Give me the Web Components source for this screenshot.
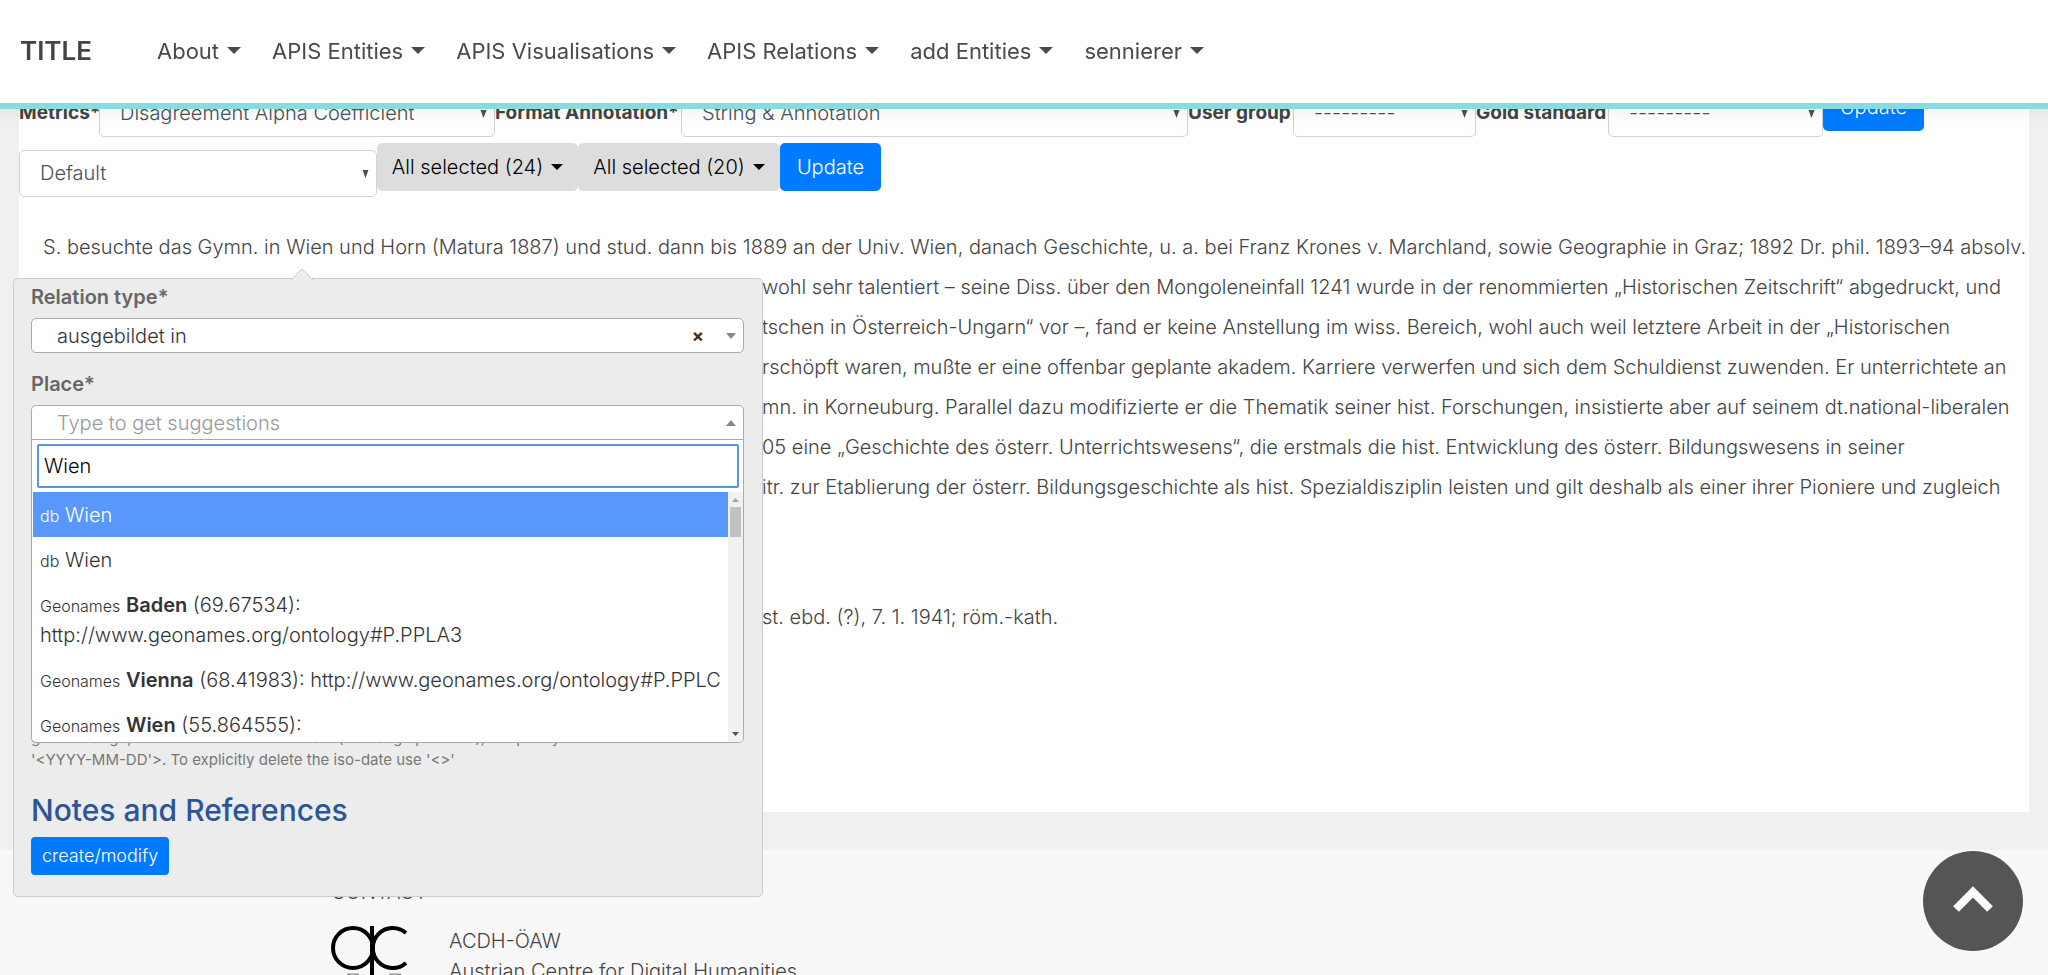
<!DOCTYPE html>
<html lang="de">
<head>
<meta charset="utf-8">
<title>APIS</title>
<style>
  body { margin: 0; font: 300 20px/30px Inter, "Liberation Sans", sans-serif; color: #444; background: #f0f0f0; }
</style>
</head>
<body>
<apis-page></apis-page>
<script>
const define = (name, html, setup) => {
  const template = document.createElement('template');
  template.innerHTML = html;
  customElements.define(name, class extends HTMLElement {
    constructor() {
      super();
      this.attachShadow({ mode: 'open' }).append(template.content.cloneNode(true));
      if (setup) setup(this, this.shadowRoot);
    }
  });
};

define('nav-item', `
<style>
  :host { display: block; }
  a { display: flex; align-items: center; gap: 8px; color: #4a4a4a; text-decoration: none; font-size: 22px; font-weight: 400; white-space: nowrap; }
  i { border: 7px solid transparent; border-top-color: currentColor; border-bottom: 0; }
</style>
<a href="#"><slot></slot><i></i></a>`);

define('site-header', `
<style>
  :host { display: block; position: fixed; inset: 0 0 auto 0; z-index: 10; background: #fff; border-bottom: 6px solid #88dbdf; box-shadow: 0 0 25px rgba(0,0,0,.08); }
  nav { display: flex; align-items: center; gap: 31px; height: 101px; padding: 0 20px 2px; }
  .brand { font-size: 26px; font-weight: 600; color: #444; text-decoration: none; width: 106px; }
</style>
<nav>
  <a class="brand" href="#">TITLE</a>
  <nav-item>About</nav-item>
  <nav-item>APIS Entities</nav-item>
  <nav-item>APIS Visualisations</nav-item>
  <nav-item>APIS Relations</nav-item>
  <nav-item>add Entities</nav-item>
  <nav-item>sennierer</nav-item>
</nav>`);

define('filter-form', `
<style>
  :host { display: block; }
  .row { display: grid; align-items: start; height: 60px; }
  .first { grid-template-columns: 80fr 396fr 186fr 507fr 105fr 183fr 132fr 215fr 101fr 105fr; }
  .second { grid-template-columns: 358fr 201fr 202fr 101fr 1148fr; }
  label { margin-top: 7px; line-height: 45px; font-weight: 700; font-size: 19px; white-space: nowrap; min-width: 0; }
  .pick { display: grid; align-items: center; margin-top: 7px; min-width: 0; }
  .pick > * { grid-area: 1 / 1; }
  .pick svg { justify-self: end; margin-right: 8px; width: 7px; height: 8px; fill: #495057; pointer-events: none; }
  select { appearance: none; box-sizing: border-box; width: 100%; height: 47px; padding: 0 20px 2px; border: 1px solid #ced4da; border-radius: 5px; background: #fff; color: #495057; font: inherit; }
  button { display: flex; align-items: center; justify-content: center; gap: 8px; box-sizing: border-box; height: 48px; padding: 0; border: 0; border-radius: 5px; background: #007bff; color: #fff; font: inherit; white-space: nowrap; min-width: 0; }
  .multi { background: #ddd; color: #000; }
  .multi i { border: 6px solid transparent; border-top-color: #000; border-bottom: 0; }
</style>
<form>
  <div class="row first">
    <label for="metrics">Metrics*</label>
    <span class="pick"><select id="metrics"><option>Disagreement Alpha Coefficient</option></select><svg viewBox="0 0 6 8"><path d="M0 0h6L3 8z"/></svg></span>
    <label for="format">Format Annotation*</label>
    <span class="pick"><select id="format"><option>String &amp; Annotation</option></select><svg viewBox="0 0 6 8"><path d="M0 0h6L3 8z"/></svg></span>
    <label for="group">User group</label>
    <span class="pick"><select id="group"><option>---------</option></select><svg viewBox="0 0 6 8"><path d="M0 0h6L3 8z"/></svg></span>
    <label for="gold">Gold standard</label>
    <span class="pick"><select id="gold"><option>---------</option></select><svg viewBox="0 0 6 8"><path d="M0 0h6L3 8z"/></svg></span>
    <button type="button">Update</button>
  </div>
  <div class="row second">
    <span class="pick"><select aria-label="Project"><option>Default</option></select><svg viewBox="0 0 6 8"><path d="M0 0h6L3 8z"/></svg></span>
    <button type="button" class="multi">All selected (24)<i></i></button>
    <button type="button" class="multi">All selected (20)<i></i></button>
    <button type="button">Update</button>
  </div>
</form>`);

define('text-line', `
<style>
  :host { display: flex; line-height: 40px; white-space: nowrap; }
  .head { flex: 0 0 719px; text-align: right; }
</style>
<span class="head"><slot name="head"></slot></span><span><slot></slot></span>`);

define('biography-text', `
<style>
  :host { display: block; padding: 24px 24px 175px; }
  p { margin: 0; line-height: 40px; white-space: nowrap; }
  .life { margin-top: 90px; }
</style>
<p>S. besuchte das Gymn. in Wien und Horn (Matura 1887) und stud. dann bis 1889 an der Univ. Wien, danach Geschichte, u. a. bei Franz Krones v. Marchland, sowie Geographie in Graz; 1892 Dr. phil. 1893–94 absolv.</p>
<text-line><span slot="head">ob</span>wohl sehr talentiert – seine Diss. über den Mongoleneinfall 1241 wurde in der renommierten „Historischen Zeitschrift“ abgedruckt, und</text-line>
<text-line><span slot="head">Deu</span>tschen in Österreich-Ungarn“ vor –, fand er keine Anstellung im wiss. Bereich, wohl auch weil letztere Arbeit in der „Historischen</text-line>
<text-line><span slot="head">e</span>rschöpft waren, mußte er eine offenbar geplante akadem. Karriere verwerfen und sich dem Schuldienst zuwenden. Er unterrichtete an</text-line>
<text-line><span slot="head">Gy</span>mn. in Korneuburg. Parallel dazu modifizierte er die Thematik seiner hist. Forschungen, insistierte aber auf seinem dt.national-liberalen</text-line>
<text-line><span slot="head">19</span>05 eine „Geschichte des österr. Unterrichtswesens“, die erstmals die hist. Entwicklung des österr. Bildungswesens in seiner</text-line>
<text-line><span slot="head">Be</span>itr. zur Etablierung der österr. Bildungsgeschichte als hist. Spezialdisziplin leisten und gilt deshalb als einer ihrer Pioniere und zugleich</text-line>
<text-line class="life"><span slot="head">ge</span>st. ebd. (?), 7. 1. 1941; röm.-kath.</text-line>`);

define('suggestion-item', `
<style>
  :host { display: block; padding: 8px 7px 7px; }
  :host([selected]) { background: #5897fb; color: #fff; }
  small { font-size: 16px; line-height: 20px; }
</style>
<small></small> <slot></slot>`, (host, root) => {
  root.querySelector('small').textContent = host.getAttribute('source');
});

define('suggestion-menu', `
<style>
  :host { display: flex; flex-direction: column; box-sizing: border-box; height: 304px; border: 1px solid #aaa; border-radius: 0 0 5px 5px; background: #fff; overflow: hidden; }
  input { box-sizing: border-box; height: 44px; margin: 4px 4px 4px 5px; padding: 0 5px; border: 2px solid #5897e0; border-radius: 2px; outline: 0; font: inherit; color: #000; }
  .results { display: flex; flex: 1; min-height: 0; margin-left: 1px; }
  .list { flex: 1; min-width: 0; overflow: hidden; color: #333; }
  .bar { display: flex; flex-direction: column; align-items: center; width: 15px; background: #f1f1f1; }
  .bar svg { width: 7px; height: 15px; }
  .thumb { width: 11px; height: 30px; background: #c1c1c1; margin-bottom: auto; }
  b { font-weight: 600; }
</style>
<input aria-label="Search" value="Wien">
<div class="results">
  <div class="list">
    <suggestion-item selected source="db">Wien</suggestion-item>
    <suggestion-item source="db">Wien</suggestion-item>
    <suggestion-item source="Geonames"><b>Baden</b> (69.67534):<br>http://www.geonames.org/ontology#P.PPLA3</suggestion-item>
    <suggestion-item source="Geonames"><b>Vienna</b> (68.41983): http://www.geonames.org/ontology#P.PPLC</suggestion-item>
    <suggestion-item source="Geonames"><b>Wien</b> (55.864555):</suggestion-item>
  </div>
  <div class="bar">
    <svg viewBox="0 0 7 15"><path d="M0 10h7L3.500 6z" fill="#a3a3a3"/></svg>
    <div class="thumb"></div>
    <svg viewBox="0 0 7 15"><path d="M0 5h7L3.500 9z" fill="#505050"/></svg>
  </div>
</div>`);

define('relation-popover', `
<style>
  :host { display: flex; flex-direction: column; box-sizing: border-box; position: absolute; z-index: 5; left: 13px; top: 278px; width: 750px; height: 619px; padding: 3px 18px 21px 17px; border: 1px solid #ccc; border-radius: 5px; background: #ececec; }
  .arrow { position: absolute; left: 277px; top: -11px; width: 22px; height: 12px; }
  label { display: block; font-weight: 600; color: #666; }
  .pick { display: flex; align-items: center; position: relative; margin: 6px 0 16px; }
  select { appearance: none; box-sizing: border-box; width: 100%; height: 35px; padding: 0 25px; border: 1px solid #aaa; border-radius: 5px; background: #fff; color: #333; font: inherit; }
  .open { border-radius: 5px 5px 0 0; color: #999; }
  .clear { position: absolute; right: 40px; padding: 0; border: 0; background: none; color: #333; font: 700 18px/24px Inter, sans-serif; }
  .tip { position: absolute; right: 8px; border: 5px solid transparent; border-top: 6px solid #888; border-bottom: 0; }
  .up { border-top: 0; border-bottom: 6px solid #888; }
  suggestion-menu { position: absolute; left: 0; right: 0; top: 34px; }
  .spacer { flex: 1; }
  .help { margin: 0; font-size: 15px; font-weight: 400; line-height: 22px; color: #777; }
  h2 { margin: 20px 0 8px; font-size: 30px; line-height: 38px; font-weight: 500; color: #2b5597; }
  .save { align-self: start; height: 38px; padding: 0 11px; border: 0; border-radius: 4px; background: #007bff; color: #fff; font: inherit; font-size: 18px; }
</style>
<svg class="arrow" viewBox="0 0 22 12"><path d="M0 12L11 1L22 12" fill="#ececec" stroke="#ccc"/></svg>
<label for="relation">Relation type*</label>
<div class="pick">
  <select id="relation"><option>ausgebildet in</option></select>
  <button class="clear" aria-label="Clear">×</button><i class="tip"></i>
</div>
<label for="place">Place*</label>
<div class="pick">
  <select id="place" class="open"><option>Type to get suggestions</option></select><i class="tip up"></i>
  <suggestion-menu></suggestion-menu>
</div>
<div class="spacer"></div>
<p class="help">given a range, use the form of the iso-date (the range part of it), or specify<br>'&lt;YYYY-MM-DD'&gt;. To explicitly delete the iso-date use '&lt;&gt;'</p>
<h2>Notes and References</h2>
<button class="save">create/modify</button>`);

define('site-footer', `
<style>
  :host { display: block; background: #f8f8f8; padding: 27px 0 0 331px; }
  h3 { margin: 0 0 19px; font-size: 20px; font-weight: 300; line-height: 30px; }
  .contact { display: flex; gap: 40px; }
  svg { width: 78px; height: 78px; }
  p { margin: 0; }
</style>
<h3>CONTACT</h3>
<div class="contact">
  <svg viewBox="0 0 78 78" fill="none" stroke="#000" stroke-width="4"><circle cx="22" cy="22" r="20"/><path d="M75 7A20 20 0 1 0 75 37"/><path d="M41 0V78"/><path d="M16 49h12M58 49h12" stroke="#999" stroke-width="3"/></svg>
  <p>ACDH-ÖAW<br>Austrian Centre for Digital Humanities</p>
</div>`);

define('to-top', `
<style>
  :host { display: block; position: fixed; right: 25px; bottom: 24px; z-index: 8; }
  button { display: block; width: 100px; height: 100px; padding: 0; border: 0; border-radius: 50%; background: #555; }
  svg { display: block; width: 100px; height: 100px; }
</style>
<button aria-label="Back to top"><svg viewBox="0 0 100 100" fill="none" stroke="#fff" stroke-width="8"><path d="M33 58L50 41L67 58"/></svg></button>`);

define('apis-page', `
<style>
  :host { display: flex; flex-direction: column; position: relative; height: 100vh; overflow: hidden; }
  main { margin: 0 19px 38px; padding-top: 83px; background: #fff; }
  site-footer { flex: 1; }
</style>
<site-header></site-header>
<main>
  <filter-form></filter-form>
  <biography-text></biography-text>
</main>
<site-footer></site-footer>
<relation-popover></relation-popover>
<to-top></to-top>`);
</script>
</body>
</html>
